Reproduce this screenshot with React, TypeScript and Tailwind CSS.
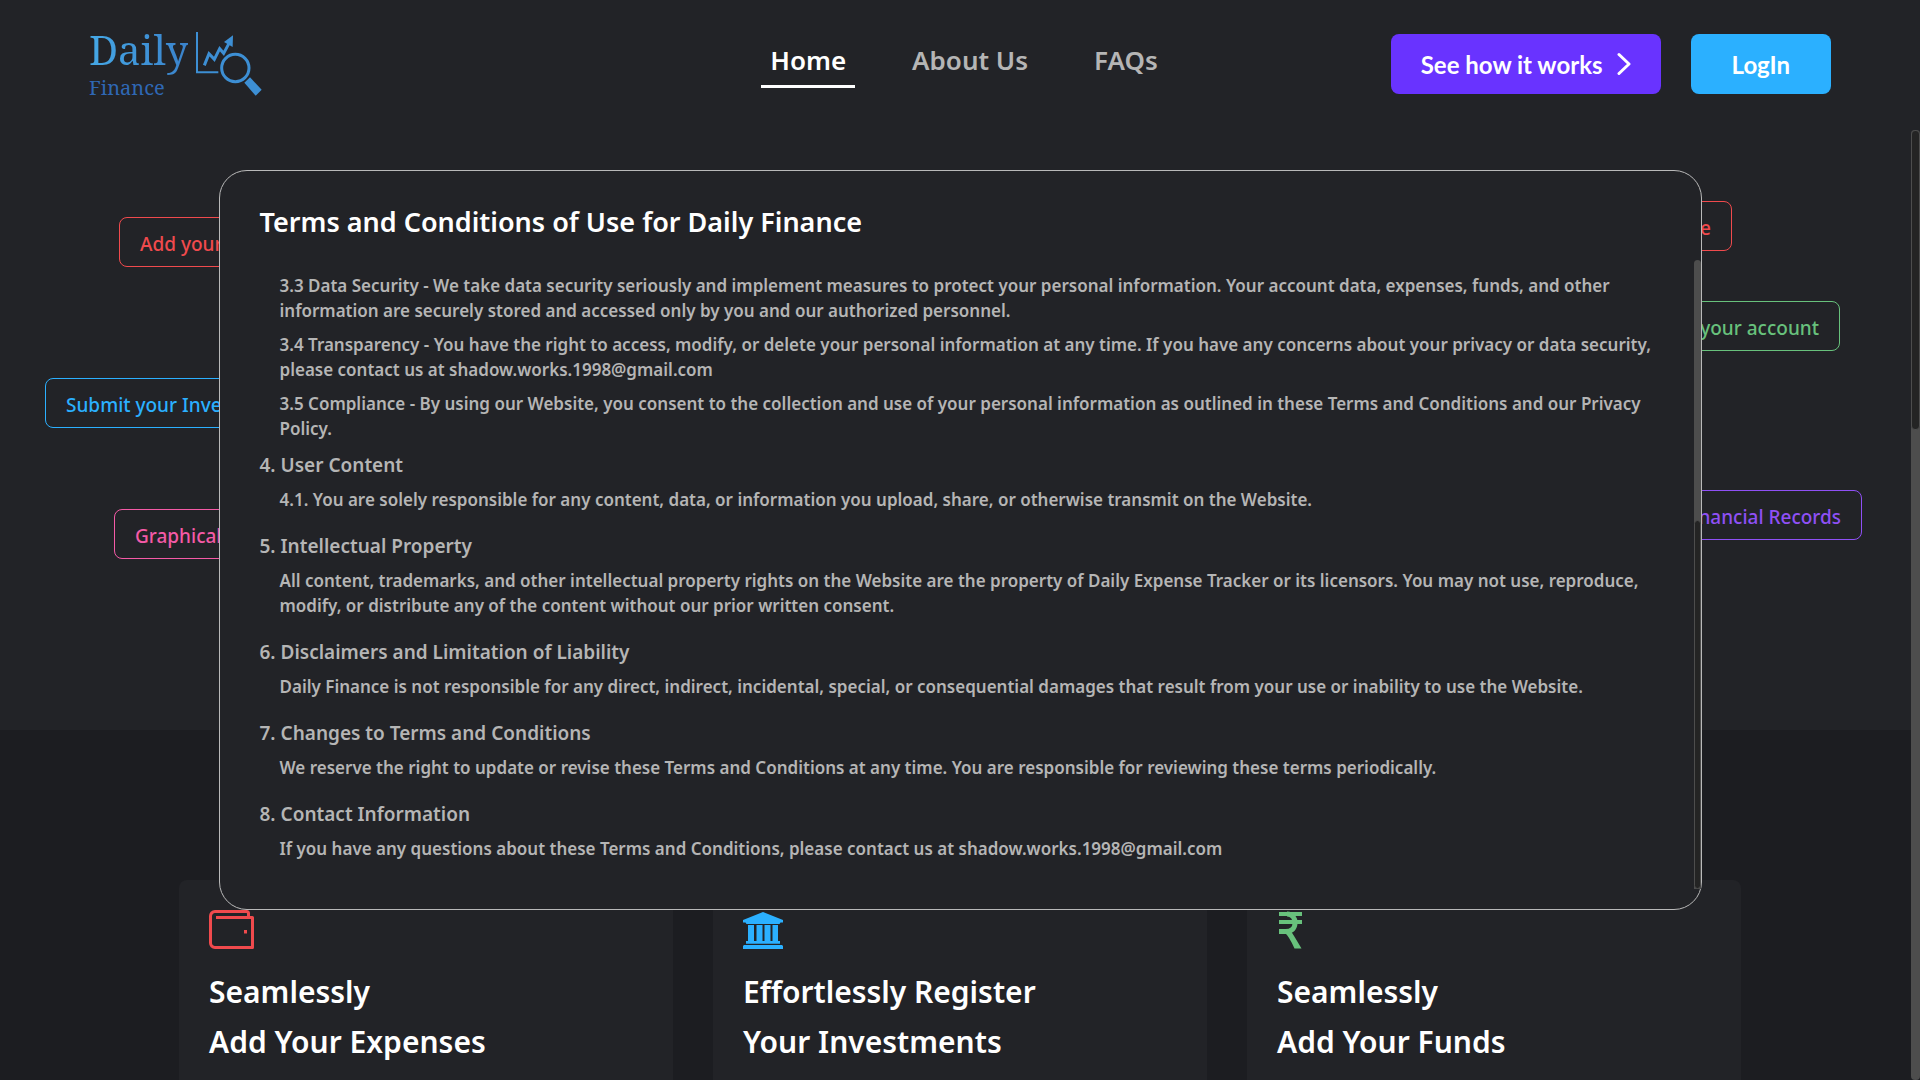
import type { ReactNode } from "react";

const navLinks = ["Home", "About Us", "FAQs"];

const chips = [
  { label: "Add your Expenses", style: "left-[119px] top-[87px] text-[#f04a4d] border-[#f04a4d]" },
  { label: "Submit your Investments", style: "left-[45px] top-[248px] text-[#2bb0ff] border-[#2bb0ff]" },
  { label: "Graphical View", style: "left-[114px] top-[379px] text-[#f45aa6] border-[#f45aa6]" },
  { label: "Track every Expense", style: "right-[188px] top-[71px] text-[#f04a4d] border-[#f04a4d]" },
  { label: "Add funds to your account", style: "right-[80px] top-[171px] text-[#68c17c] border-[#68c17c]" },
  { label: "Manage Financial Records", style: "right-[58px] top-[360px] text-[#8f50f5] border-[#8f50f5]" },
];

type Section = { title?: string; tight?: boolean; paragraphs: string[] };

const sections: Section[] = [
  {
    paragraphs: [
      "3.3 Data Security - We take data security seriously and implement measures to protect your personal information. Your account data, expenses, funds, and other information are securely stored and accessed only by you and our authorized personnel.",
      "3.4 Transparency - You have the right to access, modify, or delete your personal information at any time. If you have any concerns about your privacy or data security, please contact us at shadow.works.1998@gmail.com",
      "3.5 Compliance - By using our Website, you consent to the collection and use of your personal information as outlined in these Terms and Conditions and our Privacy Policy.",
    ],
  },
  {
    title: "4. User Content",
    tight: true,
    paragraphs: [
      "4.1. You are solely responsible for any content, data, or information you upload, share, or otherwise transmit on the Website.",
    ],
  },
  {
    title: "5. Intellectual Property",
    paragraphs: [
      "All content, trademarks, and other intellectual property rights on the Website are the property of Daily Expense Tracker or its licensors. You may not use, reproduce, modify, or distribute any of the content without our prior written consent.",
    ],
  },
  {
    title: "6. Disclaimers and Limitation of Liability",
    paragraphs: [
      "Daily Finance is not responsible for any direct, indirect, incidental, special, or consequential damages that result from your use or inability to use the Website.",
    ],
  },
  {
    title: "7. Changes to Terms and Conditions",
    paragraphs: [
      "We reserve the right to update or revise these Terms and Conditions at any time. You are responsible for reviewing these terms periodically.",
    ],
  },
  {
    title: "8. Contact Information",
    paragraphs: [
      "If you have any questions about these Terms and Conditions, please contact us at shadow.works.1998@gmail.com",
    ],
  },
];

function Logo() {
  return (
    <a href="#" aria-label="Daily Finance" className="flex items-start gap-2 justify-self-start font-['Noto_Serif',serif]">
      <span className="flex flex-col">
        <span className="bg-linear-to-r from-[#45a8e6] to-[#3a82cb] bg-clip-text pb-1 text-[40px] leading-11 text-transparent">Daily</span>
        <span className="mt-0.5 text-xl leading-5 text-[#2f68b5]">Finance</span>
      </span>
      <svg viewBox="411 65 198 192" className="mt-1 h-16 w-[66px]" fill="none" stroke="#3d8fd4" aria-hidden="true">
        <path d="M414 65v121h64" strokeWidth="6" />
        <path d="M436 165l14-35 16 17 16-32 12 14 16-30" strokeWidth="9" />
        <path d="M522 75l-27 20 26 15z" fill="#3d8fd4" stroke="none" />
        <circle cx="529" cy="173" r="41" strokeWidth="9" />
        <path d="M556 217l17-16 35 37-18 18z" fill="#3d8fd4" stroke="none" />
      </svg>
    </a>
  );
}

function WalletIcon() {
  return (
    <svg viewBox="0 0 45 40" className="h-10 w-[45px]" fill="none" stroke="#f04a4d" strokeWidth="3" aria-hidden="true">
      <path d="M7 7.5h36.5v30H6a4.500 4.500 0 0 1-4.500-4.500V6A4.500 4.500 0 0 1 6 1.500h31.500q2 0 2 2v4" strokeLinejoin="round" />
      <path d="M35 20h3v3.500h-3z" fill="#f04a4d" stroke="none" />
    </svg>
  );
}

function BankIcon() {
  return (
    <svg viewBox="0 -2 40 40" className="h-10 w-10" fill="#2bb0ff" aria-hidden="true">
      <path d="M20 0L40 8v2.500h-2.500L36.500 12h-33L2.500 10.500H0V8z" />
      <path d="M5 13h6v16h2.500V13h6v16h2V13h6v16h2V13h5.500v16h2v2.700h-34V29h2z" />
      <path d="M1 33h38l1 1v3H0v-3z" />
    </svg>
  );
}

function RupeeIcon() {
  return (
    <svg viewBox="0 -2 34 40" className="h-10 w-[34px]" fill="none" stroke="#68c17c" strokeWidth="4" aria-hidden="true">
      <path d="M2 2h23M2 10h23" />
      <path d="M2 19.500h6.500C15 19.500 18 16 18 11S15.500 2 10 2" strokeWidth="5" />
      <path d="M7 20L13.800 19Q16 22 24.500 36.500H17.500Q12 24 7 20z" fill="#68c17c" stroke="none" />
    </svg>
  );
}

const cards: { icon: ReactNode; lines: [string, string] }[] = [
  { icon: <WalletIcon />, lines: ["Seamlessly", "Add Your Expenses"] },
  { icon: <BankIcon />, lines: ["Effortlessly Register", "Your Investments"] },
  { icon: <RupeeIcon />, lines: ["Seamlessly", "Add Your Funds"] },
];

function Header() {
  return (
    <header className="grid h-[130px] grid-cols-[1fr_auto_1fr] items-start px-[89px] pt-7">
      <Logo />
      <nav className="mt-[14px] ml-2 flex gap-12 text-[26px] leading-9 font-semibold">
        {navLinks.map((link) => (
          <a
            key={link}
            href="#"
            className={
              link === "Home"
                ? "border-b-[3px] border-white px-[9px] pb-[7px] text-white"
                : "border-b-[3px] border-transparent px-[9px] pb-[7px] text-[#b5b5b5]"
            }
          >
            {link}
          </a>
        ))}
      </nav>
      <div className="mt-[6px] flex gap-[30px] justify-self-end font-['Lato',sans-serif] text-2xl font-bold text-white">
        <button className="flex h-[60px] items-center gap-[14px] rounded-lg bg-[#6933ff] px-[30px]">
          <span className="pt-0.5">See how it works</span>
          <svg viewBox="0 0 14 24" className="h-6 w-[14px]" fill="none" stroke="currentColor" strokeWidth="3" strokeLinecap="round" strokeLinejoin="round" aria-hidden="true">
            <path d="M2 2.500l10 9.500-10 9.500" />
          </svg>
        </button>
        <button className="h-[60px] rounded-lg bg-[#2bb0ff] px-[41px] pt-0.5">LogIn</button>
      </div>
    </header>
  );
}

function TermsDialog() {
  return (
    <div className="fixed inset-0 flex items-center justify-center">
      <div
        role="dialog"
        aria-labelledby="terms-title"
        className="flex w-full max-w-[1483px] flex-col rounded-[28px] border border-[#b9b9b9] bg-[#222327] pt-[33px] pb-5"
      >
        <h1 id="terms-title" className="mb-5 px-10 text-[27px] leading-9 font-semibold text-white">
          Terms and Conditions of Use for Daily Finance
        </h1>
        <div className="flex">
          <div className="flex-1 pt-[13px] pr-5 pb-7 pl-10 text-[#b5b5b5]">
            {sections.map((section, i) => (
              <section key={i} className={i === 0 ? "" : section.tight ? "mt-3" : "mt-[22px]"}>
                {section.title && <h2 className="mb-[9px] text-[19px] leading-[25px] font-semibold">{section.title}</h2>}
                <div className="flex flex-col gap-[9px] pl-5 text-[17px] leading-[25px] font-semibold">
                  {section.paragraphs.map((p) => (
                    <p key={p}>{p}</p>
                  ))}
                </div>
              </section>
            ))}
          </div>
          <div className="flex w-[7px] flex-col rounded-t bg-[#4d4d4d]" aria-hidden="true">
            <div className="h-[260px]" />
            <div className="flex-1 rounded border border-[#4d4d4d] bg-[#242424]" />
          </div>
        </div>
      </div>
    </div>
  );
}

export default function App() {
  return (
    <div className="relative h-screen overflow-hidden bg-[#222327] font-['Noto_Sans',sans-serif]">
      <Header />
      <main>
        <div className="relative h-[600px]">
          {chips.map((chip) => (
            <span
              key={chip.label}
              className={`absolute flex h-[50px] items-center rounded-lg border px-5 pt-1 text-[19px] font-medium whitespace-nowrap ${chip.style}`}
            >
              {chip.label}
            </span>
          ))}
        </div>
        <div className="bg-[#1c1d21] px-[179px] pt-[150px]">
          <div className="grid grid-cols-3 gap-10">
            {cards.map((card) => (
              <article key={card.lines[1]} className="h-[320px] rounded-lg bg-[#222327] p-[30px]">
                {card.icon}
                <h2 className="mt-[17px] text-[30px] leading-[50px] font-semibold text-white">
                  {card.lines[0]}
                  <br />
                  {card.lines[1]}
                </h2>
              </article>
            ))}
          </div>
        </div>
      </main>
      <div className="absolute top-[130px] right-0 bottom-0 w-[9px] rounded bg-[#4d4d4d]" aria-hidden="true">
        <div className="h-[300px] rounded border border-[#4d4d4d] bg-[#242424]" />
      </div>
      <TermsDialog />
    </div>
  );
}
